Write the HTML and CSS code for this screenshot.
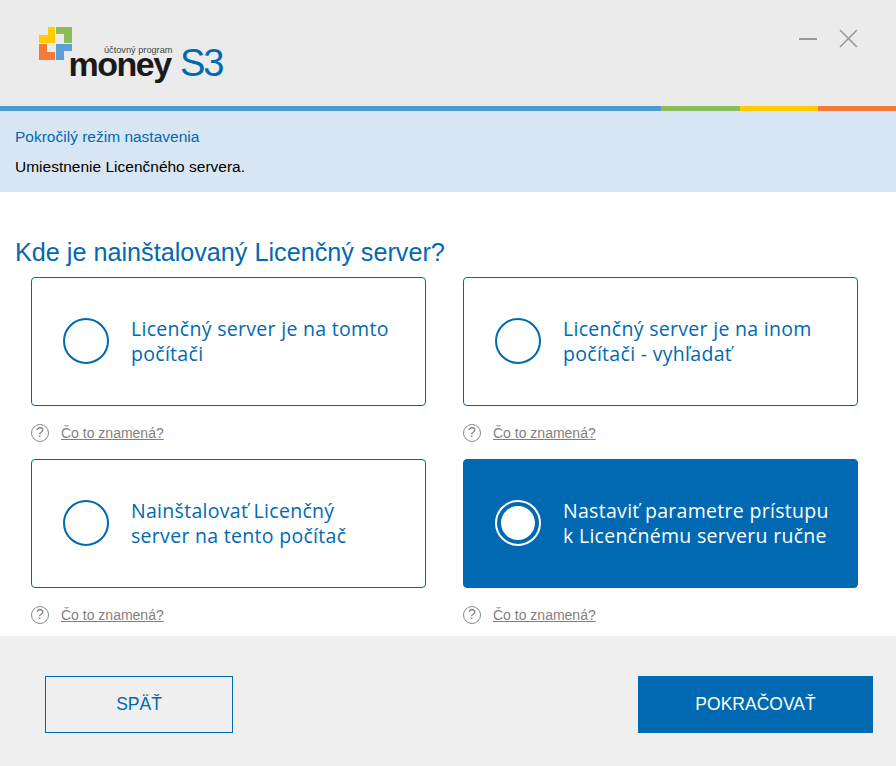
FILE: index.html
```html
<!DOCTYPE html>
<html lang="sk">
<head>
  <meta charset="UTF-8" />
  <title>Money S3</title>
  <link rel="stylesheet" href="styles.css">
</head>
<body>

  <header class="top">
    <svg class="logo" width="190" height="60" viewBox="0 0 190 60">
      <path d="M9 0H16V16H0V8H9Z" fill="#ffcb05"/>
      <path d="M17 0H33V16H25V7H17Z" fill="#8abd5a"/>
      <path d="M0 17H8V25H16V33H0Z" fill="#f47b36"/>
      <path d="M17 17H33V24H25V33H17Z" fill="#5a9fd8"/>
      <text class="logo-small" x="65" y="26">účtovný program</text>
      <text class="logo-money" x="29.5" y="49">money</text>
      <text class="logo-s3" x="141" y="49">S3</text>
    </svg>
    <div class="window-btns">
      <svg width="19" height="20" viewBox="0 0 19 20"><path d="M1 10H19" stroke="#999" stroke-width="2"/></svg>
      <svg width="20" height="20" viewBox="0 0 20 20"><path d="M1 1L18 18M18 1L1 18" stroke="#999" stroke-width="1.6"/></svg>
    </div>
  </header>

  <div class="stripe">
    <div class="s-blue"></div>
    <div class="s-green"></div>
    <div class="s-yellow"></div>
    <div class="s-orange"></div>
  </div>

  <div class="info">
    <div class="info-title">Pokročilý režim nastavenia</div>
    <div class="info-text">Umiestnenie Licenčného servera.</div>
  </div>

  <main class="content">
    <h1>Kde je nainštalovaný Licenčný server?</h1>
    <div class="grid">
      <div class="item">
        <div class="card">
          <span class="radio"></span>
          <span class="card-text">Licenčný server je na tomto počítači</span>
        </div>
        <div class="help"><span class="q">?</span><a>Čo to znamená?</a></div>
      </div>
      <div class="item">
        <div class="card">
          <span class="radio"></span>
          <span class="card-text">Licenčný server je na inom počítači - vyhľadať</span>
        </div>
        <div class="help"><span class="q">?</span><a>Čo to znamená?</a></div>
      </div>
      <div class="item">
        <div class="card">
          <span class="radio"></span>
          <span class="card-text">Nainštalovať Licenčný<br>server na tento počítač</span>
        </div>
        <div class="help"><span class="q">?</span><a>Čo to znamená?</a></div>
      </div>
      <div class="item">
        <div class="card selected">
          <span class="radio"></span>
          <span class="card-text">Nastaviť parametre prístupu<br>k Licenčnému serveru ručne</span>
        </div>
        <div class="help"><span class="q">?</span><a>Čo to znamená?</a></div>
      </div>
    </div>
  </main>

  <footer class="bottom">
    <button class="btn btn-back">SPÄŤ</button>
    <button class="btn btn-next">POKRAČOVAŤ</button>
  </footer>

</body>
</html>
```

FILE: styles.css
```css
html, body { margin: 0; padding: 0; }
body { width: 896px; height: 766px; background: #fff; font-family: "Liberation Sans", Arial, sans-serif; overflow: hidden; }

.top { height: 106px; background: #ebebeb; display: flex; justify-content: space-between; box-sizing: border-box; padding: 27px 0 0 39px; }
.logo { display: block; }
.logo-small { font-family: "Liberation Sans", sans-serif; font-size: 9.2px; fill: #444; }
.logo-money { font-family: "Liberation Sans", sans-serif; font-size: 34px; font-weight: bold; fill: #1a1a1a; letter-spacing: -1.5px; }
.logo-s3 { font-family: "Liberation Sans", sans-serif; font-size: 38px; fill: #0069b1; letter-spacing: -2px; }
.window-btns { display: flex; gap: 22px; padding: 1px 37px 0 0; align-items: flex-start; margin-top: 1px; }

.stripe { display: flex; height: 5px; }
.s-blue { width: 661px; background: #4e9bd3; }
.s-green { width: 79px; background: #8abd5a; }
.s-yellow { width: 78px; background: #ffcb05; }
.s-orange { flex: 1; background: #f47b36; }

.info { height: 81px; background: #d8e6f3; box-sizing: border-box; padding: 17px 15px 0; font-size: 15.5px; }
.info-title { color: #0069b1; line-height: 18px; }
.info-text { color: #000; line-height: 18px; margin-top: 12px; }

.content { height: 444px; box-sizing: border-box; padding: 45px 0 0; }
h1 { margin: 0 0 0 15px; font-family: "Liberation Sans", sans-serif; font-weight: 400; font-size: 25.2px; line-height: 30px; color: #0069b1; }

.grid { display: grid; grid-template-columns: 395px 395px; column-gap: 37px; row-gap: 0; padding-left: 31px; margin-top: 10px; }
.item { height: 182px; }
.card { height: 129px; box-sizing: border-box; border: 1px solid #0f639b; border-radius: 4px; display: flex; align-items: center; padding: 0 0 2px 31px; gap: 22px; color: #0069b1; }
.card-text { font-family: "Open Sans", sans-serif; font-size: 19.5px; letter-spacing: 0.3px; line-height: 25px; width: 285px; }
.radio { width: 46px; height: 46px; box-sizing: border-box; border: 2px solid #0069b1; border-radius: 50%; flex: none; }
.selected { background: #0069b1; border-color: #0069b1; color: #fff; }
.selected .radio { border-color: #fff; position: relative; }
.selected .radio::after { content: ""; position: absolute; left: 4px; top: 4px; width: 34px; height: 34px; border-radius: 50%; background: #fff; }

.help { display: flex; align-items: center; gap: 12px; margin-top: 17px; height: 20px; font-size: 14px; color: #7f7f7f; }
.help a { text-decoration: underline; }
.q { width: 18px; height: 18px; box-sizing: border-box; border: 1.5px solid #8a8a8a; border-radius: 50%; font-size: 14px; line-height: 15px; text-align: center; color: #7f7f7f; }

.bottom { height: 130px; background: #efefef; display: flex; justify-content: space-between; align-items: flex-start; box-sizing: border-box; padding: 40px 23px 0 45px; }
.btn { font-family: "Liberation Sans", sans-serif; font-size: 17.5px; height: 57px; padding: 0; border-radius: 0; cursor: pointer; }
.btn-back { width: 188px; background: transparent; border: 1px solid #0069b1; color: #0069b1; }
.btn-next { width: 235px; background: #0069b1; border: none; color: #fff; }
```
